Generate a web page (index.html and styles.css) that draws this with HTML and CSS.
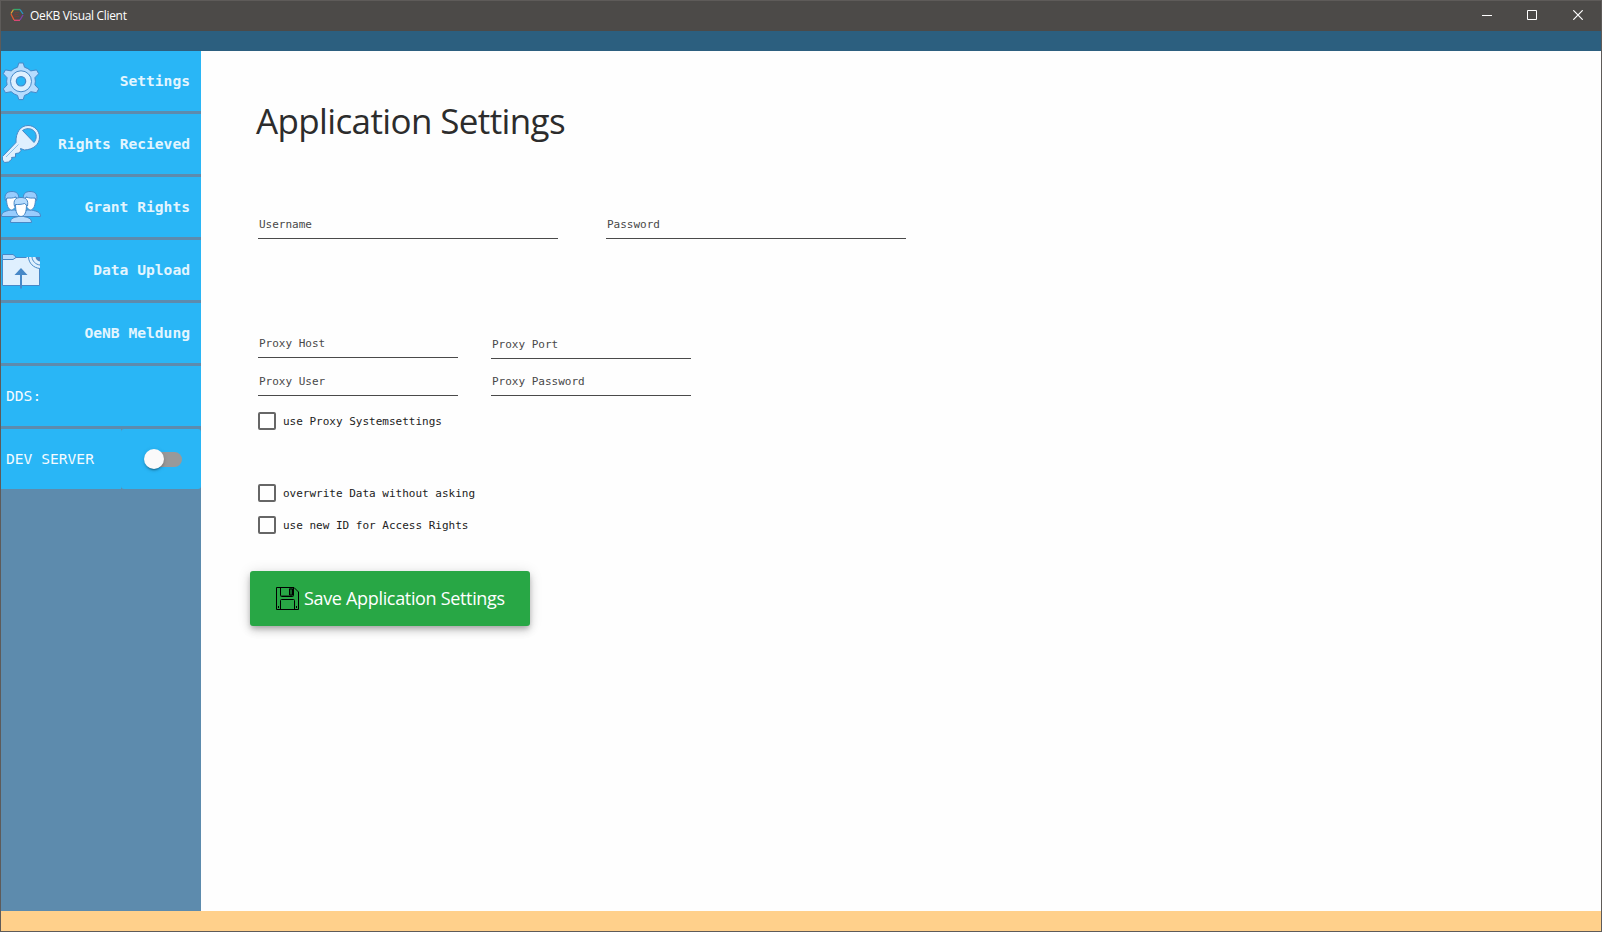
FILE: index.html
```html
<!DOCTYPE html>
<html lang="en">
<head>
<meta charset="utf-8">
<title>OeKB Visual Client</title>
<link rel="stylesheet" href="styles.css">
</head>
<body>
<div class="window">
  <header class="titlebar">
    <svg class="logo" width="14" height="14" viewBox="0 0 14 14" fill="none" stroke-width="1.3">
      <path d="M3.5 1.5 1 5.500" stroke="#e8a735"/><path d="M3.5 1.500H10" stroke="#35a86b"/>
      <path d="M10 1.500 13 6" stroke="#2499c9"/><path d="M13 7 10 12" stroke="#8040a8"/>
      <path d="M10 12.300H4" stroke="#e04878"/><path d="M4 12 1 6" stroke="#e8592c"/>
      <path d="M5 4.500h4M5 6.500h3M5 8.500h4M5 4.500v5" stroke="#773f38" stroke-width=".8"/>
    </svg>
    <span class="window-name">OeKB Visual Client</span>
    <div class="controls">
      <svg width="10" height="10" viewBox="0 0 10 10"><path d="M0 5.500h10"/></svg>
      <svg width="10" height="10" viewBox="0 0 10 10"><path d="M.5.5h9v9h-9z"/></svg>
      <svg class="close" width="10" height="10" viewBox="0 0 10 10"><path d="m.3.3 9.400 9.400M9.700.3.3 9.700" stroke-width="1.200"/></svg>
    </div>
  </header>
  <div class="topstrip"></div>
  <div class="body">
    <nav class="sidebar">
      <a class="item">
        <svg class="icon" width="40" height="40" viewBox="0 0 40 40" stroke="#4788c7">
          <path d="M16.500 6.200 17.800 2h4.400l1.300 4.200a14.500 14.500 0 0 1 6.300 3.700l5.700-1 2.200 3.800-3.800 4a14.500 14.500 0 0 1 0 7.200l3.800 4-2.200 3.800-5.700-1a14.500 14.500 0 0 1-6.300 3.700L22.200 38.600h-4.400l-1.300-4.200a14.500 14.500 0 0 1-6.300-3.700l-5.700 1-2.200-3.800 3.800-4a14.500 14.500 0 0 1 0-7.200l-3.800-4 2.200-3.800 5.700 1a14.500 14.500 0 0 1 6.300-3.700z" fill="#b6dcfe"/>
          <circle cx="20" cy="20.300" r="10.500" fill="#dff0fe"/><circle cx="20" cy="20.300" r="4.700" fill="#29b6f6" stroke-width="1.200"/>
        </svg>
        <span>Settings</span>
      </a>
      <a class="item">
        <svg class="icon" width="40" height="40" viewBox="0 0 40 40" stroke="#4788c7" fill="#dff0fe">
          <path fill-rule="evenodd" d="M15 18.500C14.500 8.500 19.500 1.600 27 1.500 33 1.400 38.500 6.500 38.500 13c0 7.500-6 12.500-15 13l-4-1.500.5 2-2 2.500-3.500.5v3.500l-4 .5.500 1.500-3.500 3-4 .5L1.500 36v-3.500zM21.500 6.500 33 18.500C36 15 36 9.500 32.500 6.500 29.500 4 25 4 21.500 6.500z"/>
          <path d="M5 33 17.500 20.500" stroke="#8bbee8" fill="none"/>
        </svg>
        <span>Rights Recieved</span>
      </a>
      <a class="item">
        <svg class="icon" width="40" height="40" viewBox="0 0 40 40" stroke="#4788c7">
          <g>
            <path d="M.5 29.500c0-4.500 3-5 9-6.500h4c5 1.500 8 2 8 6.500z" fill="#98ccfd"/>
            <path d="M5.500 11c0 7 1.500 11.500 5 12 3.500-.5 5.500-5 5.500-12l-4-2z" fill="#fff"/>
            <path d="M4.500 13.500C3 7.500 5.500 4.500 11 4.500c5 0 7.500 3 6.500 8l-3-2.500c-3 1.500-5.500 1-8.500 1z" fill="#98ccfd"/>
          </g>
          <g transform="matrix(-1 0 0 1 40 0)">
            <path d="M.5 29.500c0-4.500 3-5 9-6.500h4c5 1.500 8 2 8 6.500z" fill="#98ccfd"/>
            <path d="M5.500 11c0 7 1.500 11.500 5 12 3.500-.5 5.500-5 5.500-12l-4-2z" fill="#fff"/>
            <path d="M4.500 13.500C3 7.500 5.500 4.500 11 4.500c5 0 7.500 3 6.500 8l-3-2.500c-3 1.500-5.500 1-8.500 1z" fill="#98ccfd"/>
          </g>
          <path d="M9.500 35.500c0-5 4-5 8-6h5c4 1 8 1.500 8 6z" fill="#b6dcfe"/>
          <path d="M14.500 17c0 8 1.500 12 5.500 12.500 4-.5 5.500-4.500 5.500-12.500l-4-2z" fill="#fff"/>
          <path d="M13.500 19.500c-1.500-6.500 1-9 6.500-9s7.500 3 6.500 8.500l-3-2.500c-3 1-6 1-9 1z" fill="#b6dcfe"/>
        </svg>
        <span>Grant Rights</span>
      </a>
      <a class="item">
        <svg class="icon" width="40" height="40" viewBox="0 0 40 40" stroke="#4788c7" fill="none">
          <path d="M1.500 7.500v28h37v-28z" fill="#dff0fe"/>
          <path d="M1.500 4.500H12l3 2.500v.5l-3 2H1.500z" fill="#b6dcfe"/>
          <path d="M25 7h14v12z" stroke="none" fill="#dff0fe"/>
          <path d="M27.500 7c.2 6 5 11 11.500 11.500M31 7c.3 4 3.500 7.500 8 8"/>
          <path d="M34.500 7H39v4.500c-2.500-.3-4.200-2-4.500-4.500z" fill="#4788c7" stroke="none"/>
          <path d="M20 20v18.500" stroke-width="2"/><path d="M20 18l6.500 7h-13z" fill="#4788c7" stroke="none"/>
        </svg>
        <span>Data Upload</span>
      </a>
      <a class="item"><span>OeNB Meldung</span></a>
      <div class="item plain"><span>DDS:</span></div>
      <div class="item split">
        <div class="server">DEV SERVER</div>
        <div class="server-switch"><div class="track"><div class="knob"></div></div></div>
      </div>
    </nav>
    <main class="content">
      <h1>Application Settings</h1>
      <div class="row login">
        <div class="field wide">Username</div>
        <div class="field wide">Password</div>
      </div>
      <div class="row proxy first">
        <div class="field host">Proxy Host</div>
        <div class="field">Proxy Port</div>
      </div>
      <div class="row proxy">
        <div class="field">Proxy User</div>
        <div class="field">Proxy Password</div>
      </div>
      <label class="check system"><span class="box"></span>use Proxy Systemsettings</label>
      <label class="check overwrite"><span class="box"></span>overwrite Data without asking</label>
      <label class="check new-id"><span class="box"></span>use new ID for Access Rights</label>
      <button class="save">
        <svg width="23" height="23" viewBox="0 0 23 23" fill="none" stroke="#000">
          <path d="M.5.5H18L22.500 5v17.500H.5z"/>
          <path d="M4.500.5v8q0 1 1 1h11q1 0 1-1v-8"/>
          <path d="M5 8h8V1h4v8H5z" fill="#17662a" stroke="none"/>
          <path d="M13.500 2h3v6h-3zM4.500 22.500v-9q0-1 1-1h12q1 0 1 1v9M2.500 19v2M20.500 19v2"/>
        </svg>
        <span>Save Application Settings</span>
      </button>
    </main>
  </div>
  <footer class="statusbar"></footer>
</div>
</body>
</html>
```
FILE: styles.css
```css
* { box-sizing: border-box; }
body { margin: 0; }
.window {
  width: 1602px; height: 932px;
  display: flex; flex-direction: column;
  border: 1px solid #5e5b59;
  background: #fefefe;
  font-family: "DejaVu Sans Mono", monospace;
}
.titlebar {
  height: 30px; flex: none;
  display: flex; align-items: center;
  padding: 0 18px 2px 9px;
  background: #4c4a48; color: #fff;
}
.window-name {
  margin: 2px 0 0 6px;
  font: 12px/16px "Open Sans", sans-serif;
  letter-spacing: -0.32px;
}
.controls { margin-left: auto; display: flex; gap: 35px; }
.controls svg { fill: none; stroke: #fff; stroke-width: 1; display: block; }
.controls .close { margin-left: 1px; }
.topstrip { height: 20px; flex: none; background: #2c5f7f; }
.body { flex: 1; display: flex; min-height: 0; }
.sidebar {
  width: 200px; flex: none;
  display: flex; flex-direction: column; gap: 3px;
  background: #5d8bad;
}
.item {
  height: 60px; flex: none;
  display: flex; align-items: center; justify-content: flex-end;
  padding-right: 11px;
  background: #29b6f6; color: #e3f5fe;
  font-size: 14.62px; line-height: 20px; font-weight: bold;
}
.icon { display: block; margin-right: auto; }
.plain { justify-content: flex-start; padding-left: 5px; color: #f4fbff; font-weight: normal; }
.split { padding: 0; background: none; color: #f4fbff; font-weight: normal; }
.server, .server-switch {
  height: 60px; display: flex; align-items: center; background: #29b6f6;
}
.server { width: 120px; padding-left: 5px; }
.server-switch { width: 80px; padding-left: 24px; border-radius: 3px; }
.track {
  width: 37px; height: 15px; display: flex; align-items: center;
  border-radius: 8px; background: #999;
}
.knob {
  width: 20px; height: 20px; flex: none; margin-left: -1px;
  border-radius: 50%; background: #fafafa;
  box-shadow: 0 3px 1px -2px rgba(0,0,0,.2), 0 2px 2px rgba(0,0,0,.14), 0 1px 5px rgba(0,0,0,.12);
}
.content {
  flex: 1; padding: 46px 0 0 57px;
  display: flex; flex-direction: column; align-items: flex-start;
  color: #222; font-size: 11px;
}
h1 {
  margin: 0 0 0 -2px;
  font: 400 35px/48px "Open Sans", sans-serif;
  letter-spacing: -0.63px; color: #2c2c2c;
  white-space: nowrap;
}
.row { display: flex; align-items: flex-end; }
.login { gap: 48px; margin-top: 64px; }
.field {
  width: 200px; height: 30px; padding: 6px 0 0 1px;
  border-bottom: 1px solid #4a4a4a;
  color: #484848; line-height: 18px;
}
.wide { width: 300px; padding-top: 7px; }
.proxy { gap: 33px; margin-top: 7px; }
.proxy .field { padding-top: 7px; }
.proxy.first { margin-top: 89px; }
.host { margin-bottom: 1px; }
.check { display: flex; align-items: center; gap: 7px; height: 18px; }
.box { width: 18px; height: 18px; border: 2px solid #666; border-radius: 2px; }
.system { margin-top: 16px; }
.overwrite { margin-top: 54px; }
.new-id { margin-top: 14px; }
.save {
  width: 280px; height: 55px; margin: 37px 0 0 -8px; padding: 0 0 0 26px;
  display: flex; align-items: center; gap: 5px;
  border: 0; border-radius: 3px;
  background: #28a745; color: #fff;
  font: 18px/24px "Open Sans", sans-serif; letter-spacing: -0.33px;
  white-space: nowrap;
  box-shadow: 0 3px 5px -1px rgba(0,0,0,.2), 0 5px 8px rgba(0,0,0,.14), 0 1px 14px rgba(0,0,0,.12);
}
.save span { margin-top: -1px; }
.statusbar { height: 20px; flex: none; background: #ffd08b; }
```
